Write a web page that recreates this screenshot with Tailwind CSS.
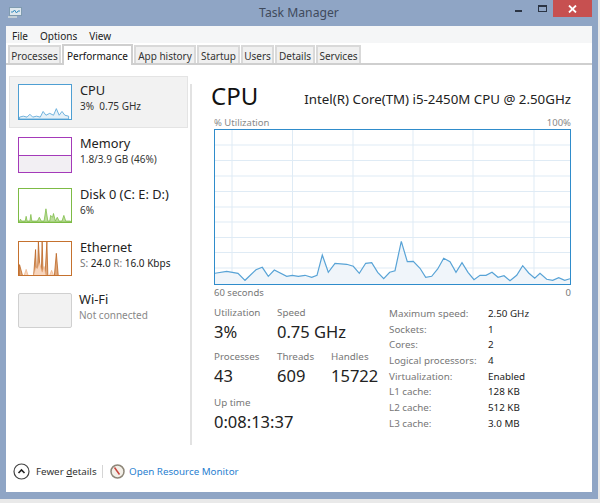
<!DOCTYPE html>
<html lang="en">
<head>
    <meta charset="UTF-8">
    <title>Task Manager</title>
    <script src="https://cdn.jsdelivr.net/npm/@tailwindcss/browser@4"></script>
</head>
<body class="w-[600px] h-[503px] overflow-hidden bg-[#e9e9e9] font-['Noto_Sans','Open_Sans',sans-serif] text-[#1a1a1a]">

    <div class="w-[598px] h-[499px] bg-[#8fa5c5] flex flex-col">

        <!-- title bar -->
        <div class="relative h-[26px] shrink-0 flex items-center justify-center">
            <svg class="absolute left-[8px] top-[6px]" width="14" height="13" viewBox="0 0 14 13">
                <rect x="1.5" y="1.5" width="12" height="8" fill="#dfe8ee" stroke="#7f9bb0"/>
                <path d="M3 6h2l1.500-2 2 3 1.500-2h2" fill="none" stroke="#3a8fc0"/>
                <rect x="0" y="10" width="9" height="2" fill="#c3cfd6"/>
            </svg>
            <span class="text-[12.200px] text-[#3f4a5c]">Task Manager</span>
            <svg class="absolute left-[515px] top-[9px]" width="8" height="4"><rect width="7" height="2" y="1" fill="#2b3444"/></svg>
            <div class="absolute left-[538px] top-[5px] w-[9px] h-[7px] border border-[#2b3444] border-t-2"></div>
            <div class="absolute left-[553px] top-0 w-[39px] h-[17px] bg-[#c75050] flex items-center justify-center">
                <svg width="9" height="8" viewBox="0 0 9 8"><path d="M1 .5l7 7M8 .5l-7 7" stroke="#fff" stroke-width="1.800"/></svg>
            </div>
        </div>

        <div class="ml-[6px] w-[586px] h-[466px] bg-white flex flex-col">

            <!-- menu -->
            <div class="h-[17px] pt-[2px] bg-[#f5f6f7] flex items-center gap-[12px] pl-[6px] text-[10px] leading-none text-[#222]">
                <span>File</span>
                <span>Options</span>
                <span>View</span>
            </div>

            <!-- tabs -->
            <div class="h-[22px] pl-[2px] pt-[2px] flex items-end gap-px border-b-2 border-[#cfcfcf] text-[10px] leading-none text-[#333]">
                <div class="w-[53px] h-[18px] pt-px bg-[#f0f0f0] border-2 border-b-0 border-[#d9d9d9] flex items-center justify-center">Processes</div>
                <div class="w-[71px] h-[21px] -mb-[2px] bg-white border-2 border-b-0 border-[#cfcfcf] flex items-center justify-center text-[#111]">Performance</div>
                <div class="w-[62px] h-[18px] pt-px bg-[#f0f0f0] border-2 border-b-0 border-[#d9d9d9] flex items-center justify-center">App history</div>
                <div class="w-[43px] h-[18px] pt-px bg-[#f0f0f0] border-2 border-b-0 border-[#d9d9d9] flex items-center justify-center">Startup</div>
                <div class="w-[33px] h-[18px] pt-px bg-[#f0f0f0] border-2 border-b-0 border-[#d9d9d9] flex items-center justify-center">Users</div>
                <div class="w-[40px] h-[18px] pt-px bg-[#f0f0f0] border-2 border-b-0 border-[#d9d9d9] flex items-center justify-center">Details</div>
                <div class="w-[45px] h-[18px] pt-px bg-[#f0f0f0] border-2 border-b-0 border-[#d9d9d9] flex items-center justify-center">Services</div>
            </div>

            <div class="flex h-[380px]">

                <!-- sidebar -->
                <div class="w-[184px] h-[369px] mt-[11px] flex flex-col shrink-0">
                    <div class="w-[179px] h-[52px] ml-[3px] bg-[#f2f2f2] border border-[#e4e4e4] flex items-center gap-[8px] pl-[8px]">
                        <svg width="54" height="36" viewBox="0 0 54 36" class="border border-[#4e9fd3] bg-white shrink-0 box-border">
                            <path d="M0 34L4 33L8 34L11 31L14 34L18 33L22 34L25 28L28 32L32 30L36 32L39 25L42 32L45 28L48 32L52 33V36H0Z" fill="#e6f1f8" stroke="#5aa6d8" stroke-width=".9"/>
                        </svg>
                        <div class="-mt-[8px]">
                            <div class="text-[12.800px] leading-[16px] text-[#222]">CPU</div>
                            <div class="text-[10px] leading-[16px] text-[#333]">3%&nbsp; 0.75 GHz</div>
                        </div>
                    </div>

                    <div class="h-[35px] mt-[9px] ml-[12px] flex items-center gap-[8px]">
                        <div class="w-[54px] h-[36px] border border-[#a43ab9] flex flex-col shrink-0">
                            <div class="h-[18px] border-b border-[#a43ab9] bg-white"></div>
                            <div class="grow bg-[#f2eff3]"></div>
                        </div>
                        <div class="-mt-[8px]">
                            <div class="text-[12.800px] leading-[16px] text-[#222]">Memory</div>
                            <div class="text-[10px] leading-[16px] text-[#333]">1.8/3.9 GB (46%)</div>
                        </div>
                    </div>

                    <div class="h-[35px] mt-[16px] ml-[12px] flex items-center gap-[8px]">
                        <svg width="54" height="35" viewBox="0 0 54 35" class="border border-[#7dbb45] bg-white shrink-0 box-border">
                            <path d="M0 34L1 32L2 34L6 34L7 29L8 34L11 34L12 27L13 34L19 34L21 30L23 34L26 34L28 21L30 34L32 34L33 28L35 30L36 26L38 34L40 30L42 34L45 34L47 28L49 34L54 34V35H0Z" fill="#bbdd9c" stroke="#7dbb45" stroke-width=".8"/>
                        </svg>
                        <div class="-mt-[8px]">
                            <div class="text-[12.800px] leading-[16px] text-[#222]">Disk 0 (C: E: D:)</div>
                            <div class="text-[10px] leading-[16px] text-[#333]">6%</div>
                        </div>
                    </div>

                    <div class="h-[35px] mt-[18px] ml-[12px] flex items-center gap-[8px]">
                        <svg width="54" height="35" viewBox="0 0 54 35" class="border border-[#c5712e] bg-white shrink-0 box-border">
                            <path d="M0 35V24L3 35M15 35L17 8L18 35M19 35L20 0L22 35M23 35L24 0L25 35M27 35L29 0L30 35M37 35L39 12L41 35" fill="#dfa77a" stroke="#b85f1c" stroke-width=".8"/>
                            <path d="M5 35L7 29L9 35M15 35L17 27L19 28L21 22L24 32L26 26L28 35M32 35L34 30L36 35" fill="#f7d6bf" stroke="#e9a878" stroke-width=".6"/>
                        </svg>
                        <div class="-mt-[8px]">
                            <div class="text-[12.800px] leading-[16px] text-[#222]">Ethernet</div>
                            <div class="text-[10px] leading-[16px] text-[#222]"><span class="text-[#777]">S:</span> 24.0 <span class="text-[#777]">R:</span> 16.0 Kbps</div>
                        </div>
                    </div>

                    <div class="h-[35px] mt-[17px] ml-[12px] flex items-center gap-[7px]">
                        <div class="w-[54px] h-[35px] border border-[#d0d0d0] bg-[#f2f2f2] rounded-[2px] shrink-0"></div>
                        <div class="-mt-[8px]">
                            <div class="text-[12.800px] leading-[16px] text-[#222]">Wi-Fi</div>
                            <div class="text-[10px] leading-[16px] text-[#888]">Not connected</div>
                        </div>
                    </div>
                </div>

                <!-- main panel -->
                <div class="w-[402px] h-[361px] mt-[19px] border-l-2 border-[#e2e2e2] pl-[19px] pr-[21px] flex flex-col">
                    <div class="h-[24px] flex items-center justify-between">
                        <span class="text-[24px] leading-none text-[#111]">CPU</span>
                        <span class="text-[13.300px] leading-none text-[#222] mt-[8px]">Intel(R) Core(TM) i5-2450M CPU @ 2.50GHz</span>
                    </div>
                    <div class="h-[10px] mt-[10px] ml-[3px] flex justify-between items-center text-[9.500px] leading-none text-[#888]">
                        <span>% Utilization</span>
                        <span>100%</span>
                    </div>
                    <svg class="mt-px ml-[3px] shrink-0 border border-[#2f8ccb] box-border" width="357" height="156" viewBox="215 131 355 154">
                        <path d="M232 130V287M292.500 130V287M353 130V287M413 130V287M473 130V287M534 130V287M214 146H572M214 161.500H572M214 177H572M214 192.500H572M214 208H572M214 223H572M214 238.500H572M214 253.500H572M214 269H572" stroke="#dfebf5" fill="none"/>
                        <path d="M214.700 274.300L226.700 272.300L238 274.300L245 281.300L256 270.700L262.300 268.300L268.300 277.300L274.300 271L286.700 277.300L292.300 276.300L298.300 277.300L305 276.300L311.700 278.300L317 276.300L322.300 256L328.300 273.300L335 264.300L346.700 265.300L353.300 267.300L359.300 274.300L365.700 264.300L371.700 263.700L377.700 273.300L383.700 279.700L389.700 273.300L395 271.700L401.300 242.300L407.300 262.700L413.300 262.300L420 269.300L425.700 278.300L431.700 277.300L437.700 270L443.700 259.300L450 262.700L456 273.300L462 263.700L468 273.300L474 280.700L480 276.300L486 276.300L492 273.300L498 278.300L504 276.700L510 281.700L516.700 276.300L522.700 266.700L528.700 274L534.700 279.300L540 274.300L546.700 280.300L552.700 281.300L558.700 278.700L564.700 281.300L570 279.700V286H214.700Z" fill="#f0f5fa" stroke="none"/>
                        <path d="M214.700 274.300L226.700 272.300L238 274.300L245 281.300L256 270.700L262.300 268.300L268.300 277.300L274.300 271L286.700 277.300L292.300 276.300L298.300 277.300L305 276.300L311.700 278.300L317 276.300L322.300 256L328.300 273.300L335 264.300L346.700 265.300L353.300 267.300L359.300 274.300L365.700 264.300L371.700 263.700L377.700 273.300L383.700 279.700L389.700 273.300L395 271.700L401.300 242.300L407.300 262.700L413.300 262.300L420 269.300L425.700 278.300L431.700 277.300L437.700 270L443.700 259.300L450 262.700L456 273.300L462 263.700L468 273.300L474 280.700L480 276.300L486 276.300L492 273.300L498 278.300L504 276.700L510 281.700L516.700 276.300L522.700 266.700L528.700 274L534.700 279.300L540 274.300L546.700 280.300L552.700 281.300L558.700 278.700L564.700 281.300L570 279.700" fill="none" stroke="#58a3d6" stroke-width="1.200"/>
                    </svg>
                    <div class="h-[10px] mt-[3px] ml-[3px] flex justify-between items-center text-[9.500px] leading-none text-[#777]">
                        <span>60 seconds</span>
                        <span>0</span>
                    </div>

                    <div class="flex mt-[8px] ml-[3px]">
                        <!-- live stats -->
                        <div class="w-[175px] shrink-0">
                            <div class="flex">
                                <div class="w-[63px]">
                                    <div class="text-[9.800px] leading-[14px] text-[#777]">Utilization</div>
                                    <div class="text-[16.500px] leading-[24px] text-[#222]">3%</div>
                                </div>
                                <div>
                                    <div class="text-[9.800px] leading-[14px] text-[#777]">Speed</div>
                                    <div class="text-[16.500px] leading-[24px] text-[#222]">0.75 GHz</div>
                                </div>
                            </div>
                            <div class="flex mt-[6px]">
                                <div class="w-[63px]">
                                    <div class="text-[9.800px] leading-[14px] text-[#777]">Processes</div>
                                    <div class="text-[16.500px] leading-[24px] text-[#222]">43</div>
                                </div>
                                <div class="w-[54px]">
                                    <div class="text-[9.800px] leading-[14px] text-[#777]">Threads</div>
                                    <div class="text-[16.500px] leading-[24px] text-[#222]">609</div>
                                </div>
                                <div>
                                    <div class="text-[9.800px] leading-[14px] text-[#777]">Handles</div>
                                    <div class="text-[16.500px] leading-[24px] text-[#222]">15722</div>
                                </div>
                            </div>
                            <div class="mt-[8px]">
                                <div class="text-[9.800px] leading-[14px] text-[#777]">Up time</div>
                                <div class="text-[16.500px] leading-[24px] text-[#222]">0:08:13:37</div>
                            </div>
                        </div>

                        <!-- static specs -->
                        <div class="grid grid-cols-[99px_1fr] auto-rows-[15.700px] items-center content-start text-[9.800px] leading-none text-[#222]">
                            <span class="text-[#777]">Maximum speed:</span><span>2.50 GHz</span>
                            <span class="text-[#777]">Sockets:</span><span>1</span>
                            <span class="text-[#777]">Cores:</span><span>2</span>
                            <span class="text-[#777]">Logical processors:</span><span>4</span>
                            <span class="text-[#777]">Virtualization:</span><span>Enabled</span>
                            <span class="text-[#777]">L1 cache:</span><span>128 KB</span>
                            <span class="text-[#777]">L2 cache:</span><span>512 KB</span>
                            <span class="text-[#777]">L3 cache:</span><span>3.0 MB</span>
                        </div>
                    </div>
                </div>
            </div>

            <!-- footer -->
            <div class="flex items-center grow pt-[6px] pl-[7px] text-[9.800px] leading-none">
                <svg width="17" height="17" viewBox="0 0 17 17" class="shrink-0">
                    <circle cx="8.500" cy="8.500" r="7.500" fill="#fff" stroke="#444" stroke-width="1.200"/>
                    <path d="M5.500 10L8.500 7L11.500 10" fill="none" stroke="#222" stroke-width="1.600"/>
                </svg>
                <span class="ml-[6px] w-[60px] whitespace-nowrap text-[#333]">Fewer <span class="underline">d</span>etails</span>
                <div class="w-px h-[13px] bg-[#d5d5d5] ml-[6px]"></div>
                <svg width="15" height="15" viewBox="0 0 15 15" class="ml-[7px] shrink-0">
                    <circle cx="7.500" cy="7.500" r="6.500" fill="#f3efe8" stroke="#8d8678" stroke-width="1.500"/>
                    <path d="M4.500 3.500L9.500 10.500" stroke="#c8443c" stroke-width="1.500"/>
                </svg>
                <span class="ml-[4px] text-[#2a7fd0]">Open Resource Monitor</span>
            </div>
        </div>
    </div>
</body>
</html>
